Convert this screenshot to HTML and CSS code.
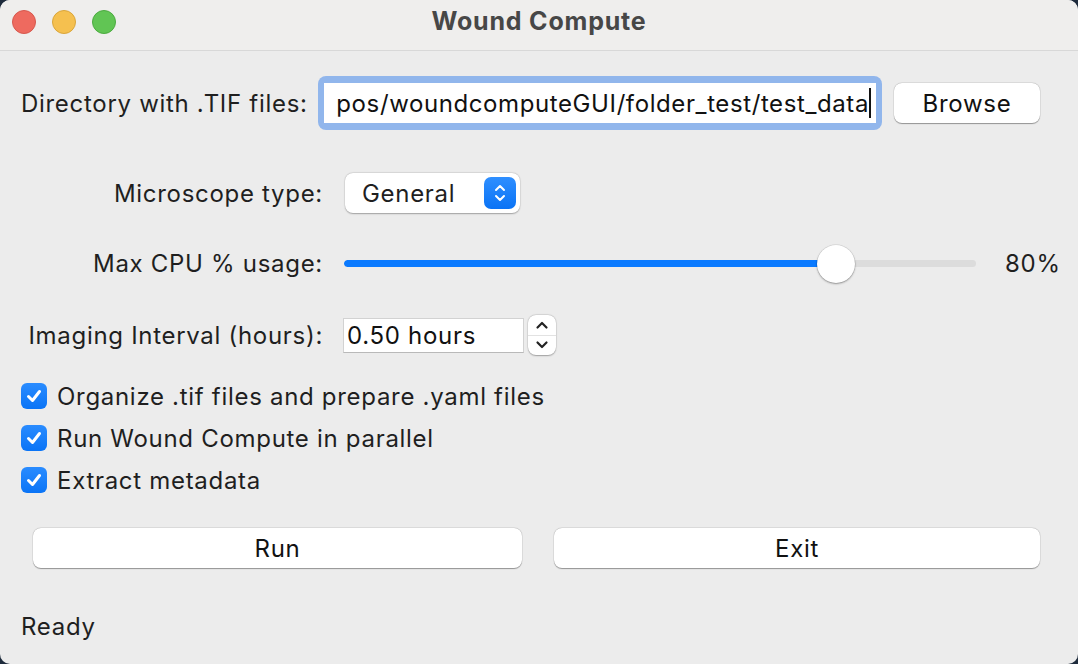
FILE: index.html
```html
<!DOCTYPE html>
<html>
<head>
<meta charset="utf-8">
<link rel="stylesheet" href="styles.css">
</head>
<body>
<div class="window">
  <div class="titlebar">
    <div class="lights">
      <span class="light red"></span>
      <span class="light yellow"></span>
      <span class="light green"></span>
    </div>
    <div class="title">Wound Compute</div>
  </div>
  <div class="content">
    <div class="row row-dir">
      <span class="dir-label">Directory with .TIF files:</span>
      <div class="focus-ring">
        <div class="entry-field"><span class="entry-text">pos/woundcomputeGUI/folder_test/test_data</span><span class="caret"></span></div>
      </div>
      <button class="btn browse">Browse</button>
    </div>

    <div class="row row-micro">
      <span class="label">Microscope type:</span>
      <div class="popup">
        <span class="popup-text">General</span>
        <span class="popup-arrows">
          <svg width="14" height="22" viewBox="0 0 14 22"><path d="M3 8 L7 4 L11 8" fill="none" stroke="#fff" stroke-width="2" stroke-linecap="round" stroke-linejoin="round"/><path d="M3 14 L7 18 L11 14" fill="none" stroke="#fff" stroke-width="2" stroke-linecap="round" stroke-linejoin="round"/></svg>
        </span>
      </div>
    </div>

    <div class="row row-cpu">
      <span class="label">Max CPU % usage:</span>
      <div class="slider">
        <div class="track"><div class="fill" style="width:77.8%"></div></div>
        <div class="knob" style="left:77.8%"></div>
      </div>
      <span class="pct">80%</span>
    </div>

    <div class="row row-int">
      <span class="label">Imaging Interval (hours):</span>
      <div class="spin-entry">0.50 hours</div>
      <div class="stepper">
        <span class="step up"><svg width="14" height="10" viewBox="0 0 14 10"><path d="M2.5 7.5 L7 3 L11.5 7.5" fill="none" stroke="#222" stroke-width="2.2" stroke-linecap="round" stroke-linejoin="round"/></svg></span>
        <span class="step down"><svg width="14" height="10" viewBox="0 0 14 10"><path d="M2.5 2.5 L7 7 L11.5 2.5" fill="none" stroke="#222" stroke-width="2.2" stroke-linecap="round" stroke-linejoin="round"/></svg></span>
      </div>
    </div>

    <div class="checks">
      <label class="check"><span class="box"><svg width="20" height="20" viewBox="0 0 20 20"><path d="M4.5 10.5 L8.5 14.5 L15.5 5.5" fill="none" stroke="#fff" stroke-width="3" stroke-linecap="round" stroke-linejoin="round"/></svg></span>Organize .tif files and prepare .yaml files</label>
      <label class="check"><span class="box"><svg width="20" height="20" viewBox="0 0 20 20"><path d="M4.5 10.5 L8.5 14.5 L15.5 5.5" fill="none" stroke="#fff" stroke-width="3" stroke-linecap="round" stroke-linejoin="round"/></svg></span>Run Wound Compute in parallel</label>
      <label class="check"><span class="box"><svg width="20" height="20" viewBox="0 0 20 20"><path d="M4.5 10.5 L8.5 14.5 L15.5 5.5" fill="none" stroke="#fff" stroke-width="3" stroke-linecap="round" stroke-linejoin="round"/></svg></span>Extract metadata</label>
    </div>

    <div class="row row-buttons">
      <button class="btn wide run">Run</button>
      <button class="btn wide exit">Exit</button>
    </div>

    <div class="status">Ready</div>
  </div>
</div>
</body>
</html>
```
FILE: styles.css
```css
* { box-sizing: border-box; }
html, body {
  margin: 0;
  padding: 0;
  width: 1078px;
  height: 664px;
  overflow: hidden;
  background: #1e2b3c;
}
body {
  font-family: Inter, "Liberation Sans", sans-serif;
  color: #1f1f1f;
}
.window {
  width: 1078px;
  height: 664px;
  background: #ececec;
  border-radius: 10px;
  overflow: hidden;
}
.titlebar {
  height: 51px;
  background: #efeeed;
  border-bottom: 1px solid #d8d8d8;
  display: flex;
  align-items: center;
  justify-content: center;
  position: relative;
}
.lights {
  position: absolute;
  left: 12px;
  top: 10px;
  display: flex;
  gap: 16px;
}
.light {
  width: 24px;
  height: 24px;
  border-radius: 50%;
  display: block;
}
.red { background: #ee6a5f; border: 1px solid #d6584e; }
.yellow { background: #f5c04f; border: 1px solid #d9a53b; }
.green { background: #61c554; border: 1px solid #4caa40; }
.title {
  font-weight: 700;
  font-size: 25px;
  letter-spacing: 0.8px;
  color: #474747;
  margin-top: -9px;
}
.content {
  display: flex;
  flex-direction: column;
  font-size: 24px;
  letter-spacing: 0.7px;
}
.row {
  display: flex;
  align-items: center;
}
.row-dir {
  margin-top: 25px;
  height: 54px;
  padding-left: 21px;
}
.dir-label { width: 297px; flex: none; white-space: nowrap; }
.focus-ring {
  width: 564px;
  height: 54px;
  border-radius: 8px;
  background: #91b6ec;
  padding: 7px 6px;
  flex: none;
}
.entry-field {
  background: #fff;
  height: 40px;
  display: flex;
  align-items: center;
  overflow: hidden;
  justify-content: flex-end;
  padding-right: 5px;
  white-space: nowrap;
  color: #111;
  letter-spacing: 0.6px;
}
.entry-text { flex: none; }
.caret {
  display: inline-block;
  width: 2px;
  height: 30px;
  background: #111;
  margin-left: 0;
  flex: none;
}
.btn {
  font-family: inherit;
  font-size: 24px;
  letter-spacing: 0.7px;
  color: #111;
  background: #fff;
  border: none;
  border-radius: 8px;
  box-shadow: 0 0.5px 1px rgba(0,0,0,0.35), 0 0 0 0.5px rgba(0,0,0,0.08);
  height: 40px;
  padding: 0;
  flex: none;
}
.browse {
  width: 146px;
  margin-left: 12px;
}
.label {
  width: 323px;
  text-align: right;
  flex: none;
  white-space: nowrap;
}
.row-micro {
  margin-top: 43px;
  height: 40px;
}
.popup {
  margin-left: 22px;
  width: 175px;
  height: 40px;
  background: #fff;
  border-radius: 8px;
  box-shadow: 0 0.5px 1.5px rgba(0,0,0,0.3), 0 0 0 0.5px rgba(0,0,0,0.06);
  display: flex;
  align-items: center;
  justify-content: space-between;
  padding: 0 4px 0 17px;
}
.popup-arrows {
  width: 32px;
  height: 32px;
  border-radius: 7px;
  background: linear-gradient(#2f8fff, #0a73f5);
  display: flex;
  align-items: center;
  justify-content: center;
}
.popup-arrows svg { display: block; }
.row-cpu {
  margin-top: 30px;
  height: 40px;
}
.slider {
  position: relative;
  margin-left: 21px;
  width: 632px;
  height: 40px;
  display: flex;
  align-items: center;
  flex: none;
}
.track {
  width: 100%;
  height: 7px;
  border-radius: 4px;
  background: #dcdcdc;
  overflow: hidden;
}
.fill {
  height: 100%;
  background: #0a7aff;
  border-radius: 4px;
}
.knob {
  position: absolute;
  top: 2px;
  width: 38px;
  height: 38px;
  margin-left: -19px;
  border-radius: 50%;
  background: #fff;
  box-shadow: 0 1px 2px rgba(0,0,0,0.35), 0 0 0 0.5px rgba(0,0,0,0.12);
}
.pct {
  margin-left: 29px;
}
.row-int {
  margin-top: 32px;
  height: 40px;
}
.spin-entry {
  margin-left: 20px;
  width: 181px;
  height: 35px;
  background: #fff;
  border: 1px solid #d2d2d2;
  border-bottom-color: #b9b9b9;
  display: flex;
  align-items: center;
  padding-left: 3px;
  color: #111;
  flex: none;
}
.stepper {
  margin-left: 4px;
  width: 28px;
  height: 40px;
  background: #fff;
  border-radius: 8px;
  box-shadow: 0 0.5px 1.5px rgba(0,0,0,0.3), 0 0 0 0.5px rgba(0,0,0,0.08);
  display: flex;
  flex-direction: column;
}
.step {
  flex: 1;
  display: flex;
  align-items: center;
  justify-content: center;
}
.step.up { border-bottom: 1px solid #e2e2e2; }
.step svg { display: block; }
.checks {
  margin-top: 20px;
  display: flex;
  flex-direction: column;
  padding-left: 21px;
}
.check {
  height: 42px;
  display: flex;
  align-items: center;
  gap: 10px;
}
.box {
  width: 26px;
  height: 26px;
  border-radius: 6px;
  background: linear-gradient(#2a8cff, #0a74f6);
  display: flex;
  align-items: center;
  justify-content: center;
}
.box svg { display: block; }
.row-buttons {
  margin-top: 27px;
  height: 40px;
  padding-left: 33px;
}
.wide.run { width: 489px; }
.wide.exit { width: 486px; margin-left: 32px; }
.status {
  margin-top: 39px;
  height: 40px;
  line-height: 40px;
  padding-left: 21px;
}
```
